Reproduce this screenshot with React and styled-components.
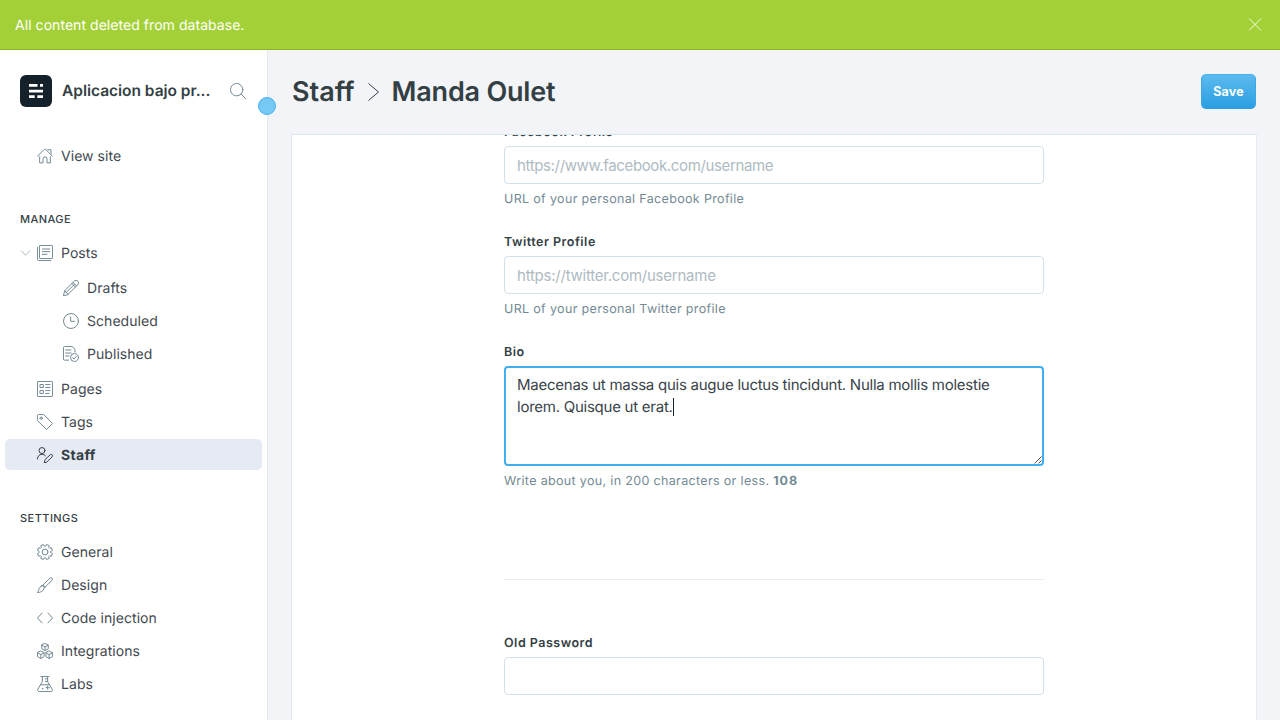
import React from "react";
import styled, { createGlobalStyle, css } from "styled-components";

const GlobalStyle = createGlobalStyle`
  *, *::before, *::after { box-sizing: border-box; }
  html, body, #root { height: 100%; margin: 0; }
  body {
    overflow: hidden;
    background: #f2f4f8;
    color: #343f44;
    font-family: "Inter", "Liberation Sans", sans-serif;
    font-size: 14px;
    letter-spacing: 0.05px;
    text-rendering: geometricPrecision;
  }
`;

const Page = styled.div`
  display: flex;
  flex-direction: column;
  height: 720px;
  width: 1280px;
`;

const Alert = styled.div`
  display: flex;
  flex: none;
  align-items: center;
  justify-content: space-between;
  height: 50px;
  padding: 0 18px 0 15px;
  background: #a4d037;
  border-bottom: 1px solid #8cb62a;
  color: #fff;
  font-size: 14px;
  line-height: 18px;
  letter-spacing: 0.05px;
`;

const AlertText = styled.span`
  padding-top: 2px;
`;

const CloseButton = styled.button`
  display: flex;
  padding: 0;
  border: 0;
  background: none;
  color: #fff;
`;

const Viewport = styled.div`
  display: flex;
  flex: 1;
  min-height: 0;
`;

const Sidebar = styled.nav`
  position: relative;
  flex: none;
  width: 268px;
  background: #fff;
  border-right: 1px solid #e3e8ef;
`;

const ResizeDot = styled.span`
  position: absolute;
  top: 47px;
  right: -9px;
  width: 18px;
  height: 18px;
  border: 1px solid #44b2f4;
  border-radius: 50%;
  background: #76c8f5;
`;

const SiteHeader = styled.header`
  display: flex;
  align-items: center;
  height: 32px;
  margin: 25px 21px 33px 20px;
  color: #738a94;
`;

const SiteLogo = styled.span`
  display: flex;
  flex: none;
  width: 32px;
  height: 32px;
  border-radius: 6px;
  background: #15212a;
`;

const SiteName = styled.span`
  flex: 1;
  padding: 0 0 2px 10px;
  color: #343f44;
  font-size: 15.5px;
  font-weight: 600;
  letter-spacing: -0.02px;
  white-space: nowrap;
`;

const SectionTitle = styled.h2`
  margin: 41px 0 11px 20px;
  font-size: 11px;
  line-height: 14px;
  font-weight: 500;
  letter-spacing: 0.45px;
  text-transform: uppercase;
`;

const NavList = styled.ul`
  display: flex;
  flex-direction: column;
  gap: 2px;
  margin: 0;
  padding: 0;
  list-style: none;
`;

const SubList = styled(NavList)`
  margin: 2px 0;
`;

const NavItem = styled.li`
  display: flex;
  align-items: center;
  gap: 8px;
  height: 31px;
  margin: 0 5px;
  padding-left: ${(p) => (p.$nested ? 58 : p.$expandable ? 15 : 32)}px;
  border-radius: 5px;
  color: #3f494f;
  line-height: 20px;
  letter-spacing: 0.05px;
  svg { flex: none; color: #738a94; }
  ${(p) =>
    p.$active &&
    css`
      background: #e5eaf3;
      font-weight: 700;
      letter-spacing: 0.3px;
      color: #343f44;
      svg { color: #394047; }
    `}
`;

const ItemIcons = styled.span`
  display: flex;
  align-items: center;
  gap: 6px;
`;

const ItemText = styled.span`
  padding-top: 2px;
`;

const Main = styled.main`
  display: flex;
  flex: 1;
  flex-direction: column;
  min-width: 0;
  padding: 0 23px;
`;

const CanvasHeader = styled.header`
  display: flex;
  flex: none;
  align-items: center;
  justify-content: space-between;
  height: 84px;
  padding: 0 1px 2px;
`;

const Title = styled.h1`
  display: flex;
  align-items: center;
  margin: 0;
  padding-top: 2px;
  font-size: 27px;
  line-height: 34px;
  font-weight: 600;
  letter-spacing: 0;
  svg { margin: 0 12px 0 13px; }
`;

const PersonName = styled.span`
  letter-spacing: -0.2px;
`;

const SaveButton = styled.button`
  width: 55px;
  height: 35px;
  padding: 0;
  border: 1px solid #3eb0ef;
  border-color: #4bb2ec #3aa8e6 #2c9fe0;
  border-radius: 5px;
  background: linear-gradient(#5cbaef, #2a9fe2);
  color: #fff;
  font-family: inherit;
  font-size: 12.5px;
  font-weight: 700;
  letter-spacing: 0.2px;
`;

const Panel = styled.section`
  flex: 1;
  min-height: 0;
  overflow: hidden;
  background: #fff;
  border: 1px solid #dfe8f0;
  border-top-color: #d8e6ee;
  border-right-color: #e9edf3;
  border-bottom: 0;
`;

const Form = styled.form`
  width: 540px;
  margin: -12px auto 0;
`;

const Field = styled.div`
  margin-bottom: 24px;
`;

const Label = styled.label`
  display: block;
  height: 23px;
  font-size: 12.5px;
  line-height: 19px;
  font-weight: 600;
  letter-spacing: 0.5px;
`;

const Input = styled.input`
  display: block;
  width: 100%;
  height: 38px;
  padding: 0 12px;
  border: 1px solid #d3e1ea;
  border-radius: 4px;
  background: #fff;
  font: 400 15px "Inter", sans-serif;
  letter-spacing: ${(p) => p.$tracking || 0}px;
  &::placeholder { color: #aebbc2; opacity: 1; }
`;

const TextBox = styled.div`
  position: relative;
  height: 100px;
  padding: 6px 11px;
  border: 2px solid #3eb0ef;
  border-radius: 4px;
  color: #3a444a;
  font-size: 15px;
  line-height: 22px;
  letter-spacing: -0.25px;
`;

const Caret = styled.span`
  display: inline-block;
  width: 1px;
  height: 18px;
  background: #15212a;
  vertical-align: -4px;
`;

const Grip = styled.svg`
  position: absolute;
  right: 0;
  bottom: 0;
`;

const Hint = styled.p`
  margin: 7px 0 0;
  height: 18px;
  color: #738a94;
  font-size: 12.5px;
  line-height: 18px;
  letter-spacing: 0.34px;
  b { letter-spacing: 1px; }
`;

const Divider = styled.hr`
  height: 1px;
  margin: 88px 0 54px;
  border: 0;
  background: #e5eff5;
`;

// Eight-toothed outline, alternating between an outer and an inner radius.
const gearOutline = (() => {
  const points = [];
  for (let i = 0; i < 8; i += 1) {
    const middle = (i * Math.PI) / 4 + Math.PI / 8;
    [
      [-0.28, 8.9],
      [-0.19, 11.5],
      [0.19, 11.5],
      [0.28, 8.9],
    ].forEach(([turn, radius]) => {
      const x = 12 + radius * Math.cos(middle + turn);
      const y = 12 + radius * Math.sin(middle + turn);
      points.push(`${x.toFixed(2)} ${y.toFixed(2)}`);
    });
  }
  return `M${points.join("L")}Z`;
})();

const drawings = {
  house: (
    <>
      <path d="M.7 12.5 11.3 1.8q.7-.7 1.4 0L23.3 12.5" />
      <path d="M16 2.7h5v6.5M4 13v9.3h5v-6a3 3 0 0 1 6 0v6h5V13" />
    </>
  ),
  search: (
    <>
      <circle cx="10" cy="10" r="9.3" />
      <path d="m16.8 16.8 6.7 6.7" />
    </>
  ),
  posts: (
    <>
      <rect x="3.7" y=".7" width="19.6" height="19.6" rx="1" />
      <path d="M.7 3.5v18.3c0 .8.7 1.5 1.5 1.5h18.3M8 6h11M8 10h11M8 14h7" />
    </>
  ),
  pencil: (
    <>
      <path d="m.7 23.3 1.8-7.2L17 1.7a3.4 3.4 0 0 1 5.3 5.2L7.6 21.5z" />
      <path d="m2.5 16.1 5.1 5.4M15 3.7 20.3 9M17.4 6.2 5 18.7M13.3 5.3l5.3 5.3" />
    </>
  ),
  clock: (
    <>
      <circle cx="12" cy="12" r="11.2" />
      <path d="M11.5 6v6.5H17" />
    </>
  ),
  published: (
    <>
      <path d="M8.5 21.2H2.2A1.5 1.5 0 0 1 .7 19.7V2.2C.7 1.4 1.4.7 2.2.7h11.3L18 5v4M4 6h8M4 10.5h8M4 15h5" />
      <circle cx="17.3" cy="17.3" r="6" />
      <path d="m14.5 17.5 2 2 3.7-4.3" />
    </>
  ),
  pages: (
    <>
      <rect x=".7" y=".7" width="22.6" height="22.6" rx="1" />
      <path d="M5 5.3h4.5v4.4H5zM5 14.3h4.5v4.4H5zM13 5.3h6.5M13 9.7h6.5M13 14.3h6.5M13 18.7h5" />
    </>
  ),
  tag: (
    <>
      <path d="M.7 2.2C.7 1.4 1.4.7 2.2.7h7.6L23.3 14.3 14.3 23.3.7 9.8z" />
      <circle cx="6.2" cy="6.2" r="1.7" />
    </>
  ),
  staff: (
    <>
      <circle cx="7.5" cy="5.3" r="4.5" />
      <path d="M.7 18c0-4 2.5-7 6.8-7 2.2 0 4 .9 5.2 2.2" />
      <path d="m11 23.3 1-4.3 7.8-7.3a2.1 2.1 0 0 1 3 3L15 22.3z" />
    </>
  ),
  gear: (
    <>
      <circle cx="12" cy="12" r="4.4" />
      <path d={gearOutline} />
    </>
  ),
  brush: (
    <>
      <path d="M8.2 13 19.6 1.5a2.3 2.3 0 0 1 3.2 3.2L11.2 16.1M7 13.5c2.3-1 4.5 1.3 3.6 3.5-1.2 4.3-5.2 6.2-9.9 6.3 2.3-3.1 1.4-7.8 6.3-9.8zM9.3 12l3 3" />
    </>
  ),
  code: <path d="M7.5 4.7.7 12l6.8 7.3M16.5 4.7l6.8 7.3-6.8 7.3" />,
  integrations: (
    <>
      <path d="m12 .7 4.9 2.4v5.6L12 11.3 7.1 8.7V3.1zM7.2 3.2 12 5.8l4.8-2.6M12 5.8v5.4" />
      <path d="m5.8 12.2 4.8 2.4v5.8l-4.8 2.9-5.1-2.9v-5.8zM.8 14.7l5 2.6 4.8-2.6M5.8 17.3v5.8" />
      <path d="m18.2 12.2 5.1 2.4v5.8l-5.1 2.9-4.8-2.9v-5.8zM13.5 14.7l4.7 2.6 5-2.6M18.2 17.3v5.8" />
    </>
  ),
  flask: (
    <>
      <path d="M6 .7h12M8 .7v8L1.2 19.8c-1 1.7.2 3.5 2 3.5h17.6c1.8 0 3-1.8 2-3.5L16 8.7v-8M5.2 13.2h13.6M12.5 4.2H16M12.5 8H16M16 15v5M13.5 17.5h5" />
      <circle cx="8" cy="19" r=".5" />
    </>
  ),
};

function Icon({ name, size = 16 }) {
  return (
    <svg
      width={size}
      height={size}
      viewBox="0 0 24 24"
      fill="none"
      stroke="currentColor"
      strokeWidth="1.5"
      strokeLinecap="round"
      strokeLinejoin="round"
    >
      {drawings[name]}
    </svg>
  );
}

function Item({ icon, children, nested, active, expandable }) {
  return (
    <NavItem $nested={nested} $active={active} $expandable={expandable}>
      <ItemIcons>
        {expandable && (
          <svg width="11" height="16" viewBox="0 0 11 16" fill="none" stroke="#a9b8c0">
            <path d="m1 5.5 4.5 4.8L10 5.5" />
          </svg>
        )}
        <Icon name={icon} />
      </ItemIcons>
      <ItemText>{children}</ItemText>
    </NavItem>
  );
}

export default function App() {
  return (
    <Page>
      <GlobalStyle />
      <Alert>
        <AlertText>All content deleted from database.</AlertText>
        <CloseButton aria-label="Close">
          <svg width="14" height="14" viewBox="0 0 14 14" stroke="currentColor" strokeWidth=".9">
            <path d="m1 .5 12 12M13 .5 1 12.5" />
          </svg>
        </CloseButton>
      </Alert>
      <Viewport>
        <Sidebar>
          <SiteHeader>
            <SiteLogo>
              <svg width="32" height="32" viewBox="0 0 32 32" fill="#fff">
                <path d="M9 9h8.5v2.8H9zM20 9h3v2.8h-3zM9 14.8h14v2.6H9zM9 20.3h5.7v2.8H9zM17.3 20.3H23v2.8h-5.7z" />
              </svg>
            </SiteLogo>
            <SiteName>Aplicacion bajo pr...</SiteName>
            <Icon name="search" />
          </SiteHeader>
          <NavList>
            <Item icon="house">View site</Item>
          </NavList>
          <SectionTitle>Manage</SectionTitle>
          <NavList>
            <Item icon="posts" expandable>Posts</Item>
            <li>
              <SubList>
                <Item icon="pencil" nested>Drafts</Item>
                <Item icon="clock" nested>Scheduled</Item>
                <Item icon="published" nested>Published</Item>
              </SubList>
            </li>
            <Item icon="pages">Pages</Item>
            <Item icon="tag">Tags</Item>
            <Item icon="staff" active>Staff</Item>
          </NavList>
          <SectionTitle>Settings</SectionTitle>
          <NavList>
            <Item icon="gear">General</Item>
            <Item icon="brush">Design</Item>
            <Item icon="code">Code injection</Item>
            <Item icon="integrations">Integrations</Item>
            <Item icon="flask">Labs</Item>
          </NavList>
          <ResizeDot />
        </Sidebar>
        <Main>
          <CanvasHeader>
            <Title>
              <span>Staff</span>
              <svg width="12" height="18" viewBox="0 0 12 18" fill="none" stroke="#343f44">
                <path d="m.5.5 10 8.5-10 8.5" />
              </svg>
              <PersonName>Manda Oulet</PersonName>
            </Title>
            <SaveButton>Save</SaveButton>
          </CanvasHeader>
          <Panel>
            <Form>
              <Field>
                <Label>Facebook Profile</Label>
                <Input $tracking={-0.36} placeholder="https://www.facebook.com/username" />
                <Hint>URL of your personal Facebook Profile</Hint>
              </Field>
              <Field>
                <Label>Twitter Profile</Label>
                <Input $tracking={-0.24} placeholder="https://twitter.com/username" />
                <Hint>URL of your personal Twitter profile</Hint>
              </Field>
              <Field>
                <Label>Bio</Label>
                <TextBox>
                  Maecenas ut massa quis augue luctus tincidunt. Nulla mollis molestie
                  <br />
                  lorem. Quisque ut erat.
                  <Caret />
                  <Grip width="8" height="8" viewBox="0 0 8 8" stroke="#444" strokeWidth=".9">
                    <path d="M.5 7.5l7-7M4.5 7.5l3-3" />
                  </Grip>
                </TextBox>
                <Hint>
                  Write about you, in 200 characters or less. <b>108</b>
                </Hint>
              </Field>
              <Divider />
              <Field>
                <Label>Old Password</Label>
                <Input type="password" />
              </Field>
            </Form>
          </Panel>
        </Main>
      </Viewport>
    </Page>
  );
}
